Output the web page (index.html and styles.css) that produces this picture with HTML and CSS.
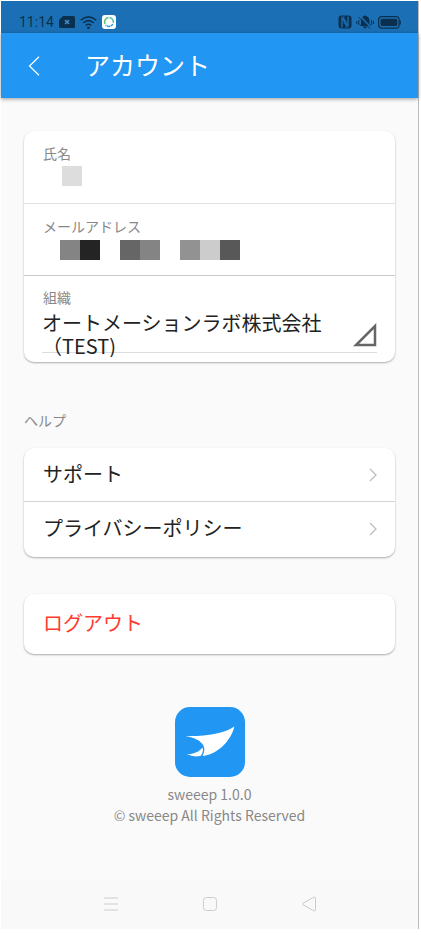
FILE: index.html
```html
<!DOCTYPE html>
<html lang="ja">
<head>
<meta charset="utf-8">
<meta name="viewport" content="width=device-width, initial-scale=1">
<title>アカウント</title>
<link rel="stylesheet" href="styles.css">
</head>
<body>
<div class="app">
  <div class="status">
    <div class="status-group">
      <span class="clock">11:14</span>
      <svg width="16" height="12" viewBox="0 0 16 12"><path d="M4 0H14.500Q16 0 16 1.500V10.500Q16 12 14.500 12H1.500Q0 12 0 10.500V4Z" fill="#0b304f"/><path d="M6 4.200L10 8M10 4.200L6 8" stroke="#3f8bc9" stroke-width="1.600"/></svg>
      <svg width="17" height="13" viewBox="0 0 17 13" fill="none" stroke="#0b304f" stroke-width="1.500"><path d="M.7 4.300Q8.500-2.500 16.300 4.300M3.200 7Q8.500 2.200 13.800 7M5.700 9.500Q8.500 7 11.300 9.500"/><circle cx="8.500" cy="11.800" r=".6" fill="#0b304f"/></svg>
      <svg width="14" height="14" viewBox="0 0 14 14"><rect width="14" height="14" rx="3" fill="#fff"/><g fill="none" stroke-width="1.500"><path d="M3 9A4.500 4.500 0 0 1 6.500 2.600" stroke="#4fc96a"/><path d="M7.500 2.600A4.500 4.500 0 0 1 11.300 8" stroke="#52c7a4"/><path d="M10.800 9A4.500 4.500 0 0 1 3.600 10" stroke="#2e9bea" stroke-dasharray="3 .5"/></g></svg>
    </div>
    <div class="status-group status-right">
      <svg width="14" height="14" viewBox="0 0 14 14"><rect x=".5" y=".5" width="13" height="13" rx="3" fill="#0b304f"/><path d="M4 12.500V3L10 11V1.500" fill="none" stroke="#1b70b5" stroke-width="1.300"/><path d="M5.800 1V3.500L8.500 7M8.200 13V10.500L5.500 7" fill="none" stroke="#1b70b5"/></svg>
      <svg width="18" height="14" viewBox="0 0 18 14"><path d="M9 .5Q13.500 1.500 13.500 6V9L15 11H4L5 9V6Q5 1.500 9 .5ZM7 11.500H11Q10.500 13.500 9 13.500T7 11.500Z" fill="#0b304f"/><path d="M3.500.5L15.500 13" stroke="#1b70b5" stroke-width="1.500"/><path d="M2.500 2L14 13.500M.8 6V9M2.800 5V10M15.600 5V10M17.500 6V9" stroke="#0b304f"/></svg>
      <svg width="23" height="13" viewBox="0 0 23 13"><rect x=".6" y=".6" width="20.500" height="11.500" rx="3.200" fill="none" stroke="#0b304f" stroke-width="1.200"/><rect x="2.500" y="2.700" width="16.800" height="7.300" rx="1.500" fill="#0b304f"/><path d="M22.300 4.500V8.500" stroke="#0b304f"/></svg>
    </div>
  </div>
  <header class="header">
    <button class="back" type="button" aria-label="戻る"><svg width="12" height="20" viewBox="0 0 12 20"><path d="M11 .8L1.500 10L11 19.200" fill="none" stroke="#fff" stroke-width="1.200"/></svg></button>
    <h1 class="title">アカウント</h1>
  </header>
  <main class="main">
    <section class="card">
      <div class="field">
        <span class="label">氏名</span>
        <div class="mask"><i></i><i class="g-dd"></i></div>
      </div>
      <div class="field field-mail">
        <span class="label">メールアドレス</span>
        <div class="mask"><i></i><i class="g-84"></i><i class="g-24"></i><i></i><i class="g-66"></i><i class="g-84"></i><i></i><i class="g-92"></i><i class="g-cc"></i><i class="g-58"></i></div>
      </div>
      <div class="field field-org">
        <label class="label" for="org">組織</label>
        <div class="picker">
          <select id="org" class="select"><option>オートメーションラボ株式会社（TEST)</option></select>
          <svg class="corner" width="24" height="24" viewBox="0 0 24 24"><path d="M3 22H22V3Z" fill="none" stroke="#666" stroke-width="2.500"/></svg>
        </div>
      </div>
    </section>
    <h2 class="label section">ヘルプ</h2>
    <nav class="card">
      <a class="row" href="#support">サポート<svg width="8" height="14" viewBox="0 0 8 14"><path d="M1 1L7 7L1 13" fill="none" stroke="#bbb" stroke-width="1.200"/></svg></a>
      <a class="row" href="#privacy">プライバシーポリシー<svg width="8" height="14" viewBox="0 0 8 14"><path d="M1 1L7 7L1 13" fill="none" stroke="#bbb" stroke-width="1.200"/></svg></a>
    </nav>
    <button class="card logout" type="button">ログアウト</button>
    <footer class="about">
      <svg width="70" height="70" viewBox="0 0 70 70"><rect width="70" height="70" rx="15" fill="#2196f3"/><path d="M10.500 29C31 29.500 48 27 59.300 19.500C57 31 45 47 27.500 49C30 44 30 40 27 36.500C23 32 17 30 10.500 29Z" fill="#fff"/><path d="M12 47C18 47.500 24 45 27.500 40.500C28.500 43 28 46 25.500 49Q18 50.500 12 47Z" fill="#fff"/></svg>
      <p class="version">sweeep 1.0.0<br>© sweeep All Rights Reserved</p>
    </footer>
  </main>
  <div class="softkeys">
    <button type="button" aria-label="履歴"><svg width="16" height="16" viewBox="0 0 16 16"><path d="M1 2H15M1 8H15M1 14H15"/></svg></button>
    <button type="button" aria-label="ホーム"><svg width="16" height="16" viewBox="0 0 16 16"><rect x="1.500" y="1.500" width="13" height="13" rx="3"/></svg></button>
    <button type="button" aria-label="戻る"><svg width="16" height="16" viewBox="0 0 16 16"><path d="M2 7.200L12.800 1.200Q14.300 .8 14.500 2.200V13.800Q14.300 15.200 12.800 14.800L2 8.800Q1 8 2 7.200Z"/></svg></button>
  </div>
</div>
</body>
</html>
```
FILE: styles.css
```css
* { box-sizing: border-box; }
body {
  margin: 0;
  padding: 1px 2px 6px 1px;
  min-height: 100vh;
  display: flex;
  flex-direction: column;
  background: #fff;
  color: #222;
  font-family: "Noto Sans CJK JP", sans-serif;
}
button { font: inherit; border: 0; background: none; padding: 0; }
svg { display: block; flex: none; }
.app {
  flex: 1;
  display: flex;
  flex-direction: column;
  background: #fafafa;
  border-right: 1px solid #bdbdbd;
}
.status {
  height: 32px;
  padding: 10px 17px 0 18px;
  display: flex;
  justify-content: space-between;
  background: #1b70b5;
}
.status-group { display: flex; align-items: center; gap: 5px; }
.status-right { gap: 4px; }
.clock { font: 14px/20px Roboto, sans-serif; color: #0b304f; }
.header {
  height: 65px;
  padding-left: 27px;
  display: flex;
  align-items: center;
  gap: 45px;
  background: #2196f3;
  box-shadow: 0 1px 4px rgba(0, 0, 0, .4);
}
.title { margin: 0 0 4px; font-size: 25px; font-weight: 400; line-height: 36px; color: #fff; }
.main { flex: 1; padding: 33px 23px 0; display: flex; flex-direction: column; }
.card {
  border-radius: 10px;
  background: #fff;
  box-shadow: 0 1px 2px rgba(0, 0, 0, .32);
}
.label { display: block; margin: 0; font-size: 14px; font-weight: 400; line-height: 20px; color: #888; }
.field { height: 73px; padding: 12px 18px 0; border-bottom: 1px solid #e0e0e0; }
.field .label { padding-left: 1px; }
.field-mail { height: 72px; padding-left: 16px; border-color: #c8c8c8; }
.field-mail .label { padding-left: 3px; }
.field-org { height: auto; padding-top: 11px; padding-bottom: 9px; border: 0; }
.mask { display: flex; margin-top: 3px; height: 20px; }
.field-mail .mask { margin-top: 4px; }
.mask i { width: 20px; }
.g-dd { background: #ddd; }
.g-84 { background: #848484; }
.g-24 { background: #242424; }
.g-66 { background: #666; }
.g-92 { background: #929292; }
.g-cc { background: #ccc; }
.g-58 { background: #585858; }
.picker { display: flex; align-items: flex-start; height: 46px; border-bottom: 1px solid #ddd; }
.corner { margin-top: 16px; }
.select {
  flex: 1;
  min-width: 0;
  appearance: none;
  border: 0;
  padding: 4px 0 0;
  background: none;
  color: #222;
  font: 20px/23px "Noto Sans CJK JP", sans-serif;
  white-space: normal;
}
.section { margin-top: 48px; margin-bottom: 18px; }
.row {
  display: flex;
  align-items: center;
  justify-content: space-between;
  height: 53px;
  padding: 0 18px 3px 19px;
  font-size: 20px;
  color: #222;
  text-decoration: none;
}
.row svg { margin-top: 3px; }
.row + .row { height: 56px; padding-bottom: 5px; border-top: 1px solid #d4d4d4; }
.logout {
  height: 60px;
  margin-top: 37px;
  padding: 0 19px 4px;
  font-size: 20px;
  text-align: left;
  color: #ff3b30;
}
.about { margin-top: 53px; display: flex; flex-direction: column; align-items: center; }
.version { margin: 7px 0 0; font-size: 14px; line-height: 21px; text-align: center; color: #888; }
.softkeys {
  height: 50px;
  padding: 0 60px;
  display: flex;
  justify-content: space-around;
  align-items: center;
  background: #f9f9f9;
}
.softkeys svg { fill: none; stroke: #ccc; }
```
